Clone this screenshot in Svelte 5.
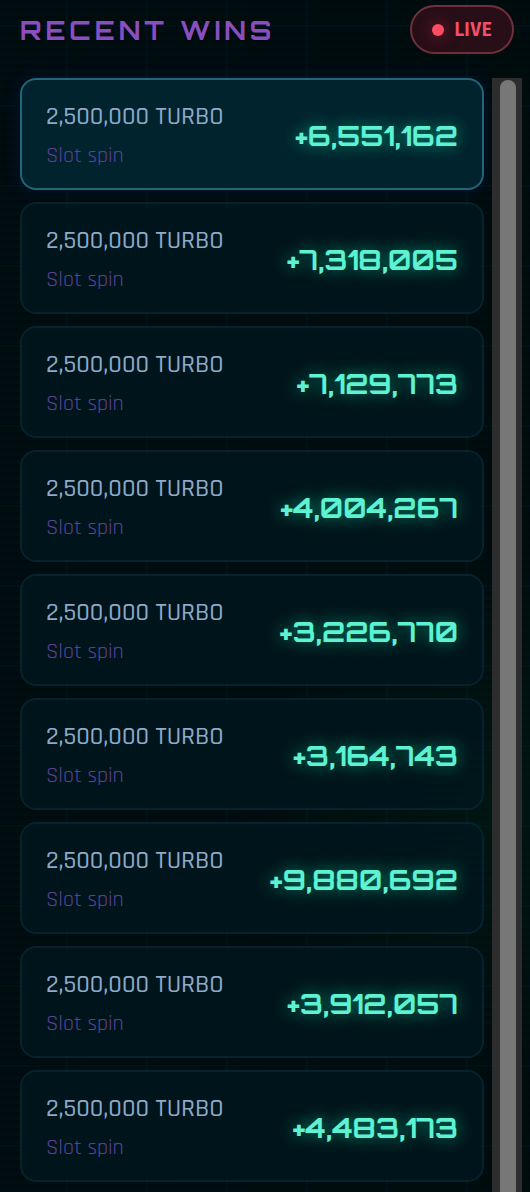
<!-- src/App.svelte -->
<script>
  const wins = [
    6551162, 7318005, 7129773, 4004267, 3226770,
    3164743, 9880692, 3912057, 4483173
  ].map((amount, i) => ({ id: i, bet: 2500000, game: 'TURBO', type: 'Slot spin', amount }));

  const format = (n) => n.toLocaleString('en-US');
</script>

<section class="recent-wins">
  <header>
    <h2>RECENT WINS</h2>
    <span class="live"><i class="dot"></i>LIVE</span>
  </header>

  <div class="feed">
    <ul>
      {#each wins as win, i (win.id)}
        <li class="win" class:latest={i === 0}>
          <div class="info">
            <span class="bet">{format(win.bet)} {win.game}</span>
            <span class="type">{win.type}</span>
          </div>
          <strong class="amount">+{format(win.amount)}</strong>
        </li>
      {/each}
    </ul>
    <div class="track" aria-hidden="true">
      <div class="thumb"></div>
    </div>
  </div>
</section>

<style>
  :global(body) {
    background: #000a0e;
  }

  .recent-wins {
    box-sizing: border-box;
    display: flex;
    flex-direction: column;
    height: 100vh;
    padding: 5px 8px 0 20px;
    overflow: hidden;
    font-family: Rajdhani, Roboto, sans-serif;
    background:
      linear-gradient(90deg, rgba(0, 200, 255, 0.03) 2px, transparent 2px) 66px 0 / 80px 80px,
      linear-gradient(rgba(0, 200, 255, 0.03) 2px, transparent 2px) 0 25px / 80px 80px,
      radial-gradient(circle at 94% 68%, rgba(0, 50, 30, 0.25), transparent 260px),
      repeating-linear-gradient(rgba(0, 0, 0, 0.15) 0 4px, transparent 4px 8px),
      linear-gradient(90deg, #000d11, #000d0f);
  }

  header {
    display: flex;
    align-items: center;
    justify-content: space-between;
    flex-shrink: 0;
    margin: 0 8px 24px 0;
  }

  h2 {
    margin: 0;
    color: #8a4fbf;
    font: 700 26px/32px Orbitron, 'DejaVu Sans', sans-serif;
    letter-spacing: 4px;
  }

  .live {
    box-sizing: border-box;
    display: flex;
    align-items: center;
    gap: 10px;
    height: 49px;
    padding: 0 20px;
    border: 2px solid #70303b;
    border-radius: 25px;
    background: #270e17;
    color: #f84e66;
    font-size: 22px;
    font-weight: 700;
  }

  .dot {
    width: 12px;
    height: 12px;
    border-radius: 50%;
    background: #ff4b64;
    box-shadow: 0 0 16px rgba(255, 60, 90, 0.5);
  }

  .feed {
    display: flex;
    flex: 1;
    gap: 8px;
    min-height: 0;
  }

  ul {
    display: flex;
    flex: 1;
    flex-direction: column;
    gap: 12px;
    margin: 0;
    padding: 0;
    list-style: none;
  }

  .win {
    box-sizing: border-box;
    display: flex;
    flex-shrink: 0;
    align-items: center;
    justify-content: space-between;
    height: 112px;
    padding: 3px 24px 0;
    border: 2px solid #06222c;
    border-radius: 16px;
    background: rgba(0, 22, 29, 0.9);
  }

  .win.latest {
    border-color: #226478;
    background: #00232d;
    box-shadow: 0 0 16px rgba(0, 30, 90, 0.45);
  }

  .info {
    display: flex;
    flex-direction: column;
    gap: 6px;
  }

  .bet {
    color: #8daaca;
    font-size: 26px;
    font-weight: 500;
    line-height: 34px;
  }

  .type {
    color: #5c4096;
    font-size: 22px;
    font-weight: 400;
    line-height: 32px;
  }

  .amount {
    color: #5cf2d2;
    font: 700 28px/32px Orbitron, 'DejaVu Sans', sans-serif;
    text-shadow: 0 0 16px rgba(0, 255, 190, 0.55);
  }

  .track {
    box-sizing: border-box;
    width: 30px;
    padding: 2px 6px 0 8px;
    background: #2d2d2d;
  }

  .thumb {
    height: 100%;
    border-radius: 8px 8px 0 0;
    background: #777;
  }
</style>
